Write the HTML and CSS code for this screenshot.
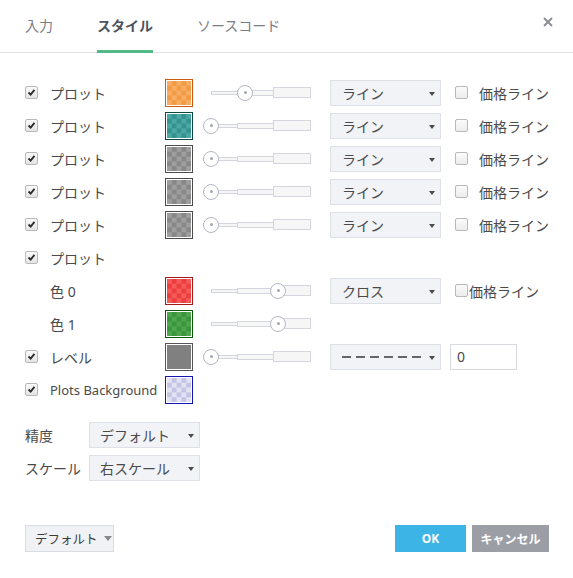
FILE: index.html
```html
<!DOCTYPE html>
<html lang="ja">
<head>
<meta charset="utf-8">
<link rel="stylesheet" href="styles.css">
</head>
<body>
<div class="dialog">
  <div class="header">
    <div class="tabs">
      <div class="tab">入力</div>
      <div class="tab active">スタイル</div>
      <div class="tab">ソースコード</div>
    </div>
    <div class="close">
      <svg width="10" height="10" viewBox="0 0 10 10"><path d="M1 1 L9 9 M9 1 L1 9" stroke="#8a8d94" stroke-width="2"/></svg>
    </div>
  </div>

  <div class="content">
    <div class="row">
      <span class="cb checked"><svg viewBox="0 0 13 13"><path d="M3 6.5 L5.5 9 L10 3.5" fill="none" stroke="#2b2b2b" stroke-width="2.2"/></svg></span>
      <span class="label">プロット</span>
      <span class="swatch orange"><span class="inner"></span></span>
      <span class="slider"><span class="track"><i class="s1"></i><i class="s2"></i><i class="s3"></i></span><span class="thumb pos-a"></span></span>
      <span class="select"><span>ライン</span><span class="arrow"></span></span>
      <span class="cb price"></span><span class="ptext">価格ライン</span>
    </div>
    <div class="row">
      <span class="cb checked"><svg viewBox="0 0 13 13"><path d="M3 6.5 L5.5 9 L10 3.5" fill="none" stroke="#2b2b2b" stroke-width="2.2"/></svg></span>
      <span class="label">プロット</span>
      <span class="swatch teal"><span class="inner"></span></span>
      <span class="slider"><span class="track"><i class="s1"></i><i class="s2"></i><i class="s3"></i></span><span class="thumb"></span></span>
      <span class="select"><span>ライン</span><span class="arrow"></span></span>
      <span class="cb price"></span><span class="ptext">価格ライン</span>
    </div>
    <div class="row">
      <span class="cb checked"><svg viewBox="0 0 13 13"><path d="M3 6.5 L5.5 9 L10 3.5" fill="none" stroke="#2b2b2b" stroke-width="2.2"/></svg></span>
      <span class="label">プロット</span>
      <span class="swatch gray"><span class="inner"></span></span>
      <span class="slider"><span class="track"><i class="s1"></i><i class="s2"></i><i class="s3"></i></span><span class="thumb"></span></span>
      <span class="select"><span>ライン</span><span class="arrow"></span></span>
      <span class="cb price"></span><span class="ptext">価格ライン</span>
    </div>
    <div class="row">
      <span class="cb checked"><svg viewBox="0 0 13 13"><path d="M3 6.5 L5.5 9 L10 3.5" fill="none" stroke="#2b2b2b" stroke-width="2.2"/></svg></span>
      <span class="label">プロット</span>
      <span class="swatch gray"><span class="inner"></span></span>
      <span class="slider"><span class="track"><i class="s1"></i><i class="s2"></i><i class="s3"></i></span><span class="thumb"></span></span>
      <span class="select"><span>ライン</span><span class="arrow"></span></span>
      <span class="cb price"></span><span class="ptext">価格ライン</span>
    </div>
    <div class="row">
      <span class="cb checked"><svg viewBox="0 0 13 13"><path d="M3 6.5 L5.5 9 L10 3.5" fill="none" stroke="#2b2b2b" stroke-width="2.2"/></svg></span>
      <span class="label">プロット</span>
      <span class="swatch gray"><span class="inner"></span></span>
      <span class="slider"><span class="track"><i class="s1"></i><i class="s2"></i><i class="s3"></i></span><span class="thumb"></span></span>
      <span class="select"><span>ライン</span><span class="arrow"></span></span>
      <span class="cb price"></span><span class="ptext">価格ライン</span>
    </div>
    <div class="row">
      <span class="cb checked"><svg viewBox="0 0 13 13"><path d="M3 6.5 L5.5 9 L10 3.5" fill="none" stroke="#2b2b2b" stroke-width="2.2"/></svg></span>
      <span class="label">プロット</span>
    </div>
    <div class="row">
      <span class="cb blank"></span>
      <span class="label">色 0</span>
      <span class="swatch red"><span class="inner"></span></span>
      <span class="slider"><span class="track"><i class="s1"></i><i class="s2"></i><i class="s3"></i></span><span class="thumb pos-b"></span></span>
      <span class="select"><span>クロス</span><span class="arrow"></span></span>
      <span class="cb price"></span><span class="ptext tight">価格ライン</span>
    </div>
    <div class="row">
      <span class="cb blank"></span>
      <span class="label">色 1</span>
      <span class="swatch green"><span class="inner"></span></span>
      <span class="slider"><span class="track"><i class="s1"></i><i class="s2"></i><i class="s3"></i></span><span class="thumb pos-b"></span></span>
    </div>
    <div class="row">
      <span class="cb checked"><svg viewBox="0 0 13 13"><path d="M3 6.5 L5.5 9 L10 3.5" fill="none" stroke="#2b2b2b" stroke-width="2.2"/></svg></span>
      <span class="label">レベル</span>
      <span class="swatch level"><span class="inner"></span></span>
      <span class="slider"><span class="track"><i class="s1"></i><i class="s2"></i><i class="s3"></i></span><span class="thumb"></span></span>
      <span class="select"><span class="dashes"><i></i><i></i><i></i><i></i><i></i><i></i></span><span class="arrow"></span></span>
      <span class="input">0</span>
    </div>
    <div class="row">
      <span class="cb checked"><svg viewBox="0 0 13 13"><path d="M3 6.5 L5.5 9 L10 3.5" fill="none" stroke="#2b2b2b" stroke-width="2.2"/></svg></span>
      <span class="label latin">Plots Background</span>
      <span class="swatch bg"><span class="inner"></span></span>
    </div>

    <div class="opts">
      <div class="orow">
        <span class="olabel">精度</span>
        <span class="select small"><span>デフォルト</span><span class="arrow"></span></span>
      </div>
      <div class="orow">
        <span class="olabel">スケール</span>
        <span class="select small"><span>右スケール</span><span class="arrow"></span></span>
      </div>
    </div>
  </div>

  <div class="footer">
    <span class="defbtn">デフォルト<span class="darrow"></span></span>
    <div class="actions">
      <span class="btn ok">OK</span>
      <span class="btn cancel">キャンセル</span>
    </div>
  </div>
</div>
</body>
</html>
```

FILE: styles.css
```css
* { box-sizing: border-box; }
html, body { margin: 0; padding: 0; background: #fff; }
body {
  font-family: "Noto Sans", "Noto Sans CJK JP", sans-serif;
  font-size: 14px;
  color: #4a4a4a;
  width: 573px;
  height: 578px;
  overflow: hidden;
}
.dialog { display: flex; flex-direction: column; height: 578px; }

.header {
  height: 53px;
  border-bottom: 1px solid #e0e3ea;
  display: flex;
  justify-content: space-between;
  align-items: stretch;
  padding: 0 20px 0 25px;
}
.tabs { display: flex; gap: 44px; }
.tab {
  display: flex;
  align-items: center;
  color: #7a7d84;
  font-size: 14px;
  padding-top: 1px;
  margin-bottom: -1px;
  border-bottom: 3px solid transparent;
  line-height: 1;
}
.tab.active { color: #4c525e; font-weight: bold; border-bottom-color: #53b987; }
.close { display: flex; align-items: center; padding-bottom: 8px; }

.content { padding: 23px 0 0 25px; }
.row { display: flex; align-items: center; height: 33px; }

.cb {
  flex: none;
  width: 13px; height: 13px;
  border: 1px solid #b9b9b9;
  border-radius: 2px;
  background: linear-gradient(#fafafa, #e4e4e4);
  display: inline-flex;
}
.cb svg { width: 11px; height: 11px; }
.cb.blank { visibility: hidden; }
.label { width: 115px; margin-left: 12px; white-space: nowrap; }
.label.latin { font-size: 13px; }

.swatch {
  flex: none;
  width: 28px; height: 28px;
  border: 1px solid;
  padding: 1px;
  background: #fff;
}
.swatch .inner { display: block; width: 100%; height: 100%; }
.orange { border-color: #cc5a10; }
.orange .inner { background: repeating-conic-gradient(#f39a44 0 25%, #f7ae64 0 50%) 0 0 / 9.6px 9.6px; }
.teal { border-color: #0e4644; }
.teal .inner { background: repeating-conic-gradient(#36928f 0 25%, #4aa8a5 0 50%) 0 0 / 9.6px 9.6px; }
.gray { border-color: #4a4a4a; }
.gray .inner { background: repeating-conic-gradient(#888 0 25%, #9e9e9e 0 50%) 0 0 / 9.6px 9.6px; }
.red { border-color: #a81818; }
.red .inner { background: repeating-conic-gradient(#ec3e3e 0 25%, #f55a5a 0 50%) 0 0 / 9.6px 9.6px; }
.green { border-color: #0d560d; }
.green .inner { background: repeating-conic-gradient(#3a963a 0 25%, #50a650 0 50%) 0 0 / 9.6px 9.6px; }
.level { border-color: #555; }
.level .inner { background: #808080; }
.bg { border-color: #1414b4; }
.bg .inner { background: repeating-conic-gradient(#c4c4e6 0 25%, #e2e2f2 0 50%) 0 0 / 9.6px 9.6px; }

.slider {
  flex: none;
  position: relative;
  width: 109px; height: 18px;
  margin-left: 10px;
  display: flex;
  align-items: center;
}
.track { display: flex; align-items: center; margin-left: 8px; }
.track i { display: block; border: 1px solid #d3d6dd; background: #f6f6f7; }
.track .s1 { width: 27px; height: 4px; }
.track .s2 { width: 37px; height: 6px; margin-left: -1px; }
.track .s3 { width: 38px; height: 11px; margin-left: -1px; }
.thumb {
  position: absolute;
  left: 0; top: 1px;
  width: 16px; height: 16px;
  border: 1px solid #b3b7c2;
  border-radius: 50%;
  background: #fff;
}
.thumb::after {
  content: "";
  position: absolute;
  left: 5.5px; top: 5.5px;
  width: 3px; height: 3px;
  border-radius: 50%;
  background: #a3a7b0;
}
.thumb.pos-a { left: 34px; }
.thumb.pos-b { left: 67px; }

.select {
  flex: none;
  width: 111px; height: 26px;
  margin-left: 18px;
  background: #f1f3f7;
  border: 1px solid #dde0e6;
  display: flex;
  align-items: center;
  justify-content: space-between;
  padding: 0 5px 0 11px;
  color: #4a4a4a;
}
.arrow {
  width: 0; height: 0;
  border-left: 3.5px solid transparent;
  border-right: 3.5px solid transparent;
  border-top: 4px solid #4a4a4a;
  margin-top: 2px;
}
.dashes { display: flex; gap: 5px; }
.dashes i { display: block; width: 9px; height: 2px; background: #666; }

.price { margin-left: 14px; background: linear-gradient(#fbfbfb, #ececec); }
.ptext { margin-left: 11px; white-space: nowrap; }
.ptext.tight { margin-left: 1px; }

.input {
  flex: none;
  width: 67px; height: 26px;
  margin-left: 9px;
  border: 1px solid #d6d9df;
  display: flex; align-items: center;
  padding-left: 6px;
}

.opts { padding-top: 12px; }
.orow { display: flex; align-items: center; height: 33px; }
.olabel { width: 64px; white-space: nowrap; }
.select.small { margin-left: 0; width: 111px; padding-left: 10px; }

.footer {
  margin-top: auto;
  margin-bottom: 26px;
  padding: 0 24px 0 25px;
  display: flex;
  justify-content: space-between;
  align-items: center;
}
.defbtn {
  width: 89px; height: 27px;
  background: #f1f2f6;
  border: 1px solid #d9dce2;
  font-size: 12.5px;
  color: #3c3c3c;
  display: flex; align-items: center;
  padding-left: 9px;
  gap: 6px;
}
.darrow {
  width: 0; height: 0;
  border-left: 4.5px solid transparent;
  border-right: 4.5px solid transparent;
  border-top: 5px solid #888;
}
.actions { display: flex; gap: 6px; }
.btn {
  height: 27px;
  display: flex; align-items: center; justify-content: center;
  color: #fff;
  font-weight: bold;
  font-size: 12px;
}
.ok { width: 71px; background: #3cb4e6; }
.cancel { width: 77px; background: #9c9ea6; }
```
